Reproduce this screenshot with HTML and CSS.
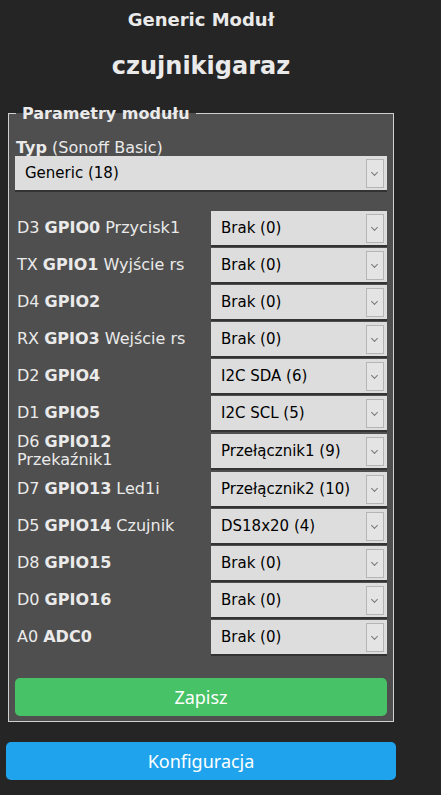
FILE: index.html
```html
<!DOCTYPE html>
<html lang="pl">
<head>
<meta charset="UTF-8" />
<meta name="viewport" content="width=device-width, initial-scale=1.0">
<title>Generic Moduł</title>
<link rel="stylesheet" href="styles.css">
</head>
<body>

<div class="main">
  <h3>Generic Moduł</h3>
  <h2>czujnikigaraz</h2>

  <fieldset>
    <legend>Parametry modułu</legend>
    <div class="typ"><b>Typ</b> (Sonoff Basic)</div>
    <div class="sel wide">
      <select><option>Generic (18)</option></select>
      <span class="arrow"></span>
    </div>

    <div class="pins">
      <div class="lbl">D3 <b>GPIO0</b> Przycisk1</div>
      <div class="sel"><select><option>Brak (0)</option></select><span class="arrow"></span></div>

      <div class="lbl">TX <b>GPIO1</b> Wyjście rs</div>
      <div class="sel"><select><option>Brak (0)</option></select><span class="arrow"></span></div>

      <div class="lbl">D4 <b>GPIO2</b></div>
      <div class="sel"><select><option>Brak (0)</option></select><span class="arrow"></span></div>

      <div class="lbl">RX <b>GPIO3</b> Wejście rs</div>
      <div class="sel"><select><option>Brak (0)</option></select><span class="arrow"></span></div>

      <div class="lbl">D2 <b>GPIO4</b></div>
      <div class="sel"><select><option>I2C SDA (6)</option></select><span class="arrow"></span></div>

      <div class="lbl">D1 <b>GPIO5</b></div>
      <div class="sel"><select><option>I2C SCL (5)</option></select><span class="arrow"></span></div>

      <div class="lbl">D6 <b>GPIO12</b><br>Przekaźnik1</div>
      <div class="sel"><select><option>Przełącznik1 (9)</option></select><span class="arrow"></span></div>

      <div class="lbl">D7 <b>GPIO13</b> Led1i</div>
      <div class="sel"><select><option>Przełącznik2 (10)</option></select><span class="arrow"></span></div>

      <div class="lbl">D5 <b>GPIO14</b> Czujnik</div>
      <div class="sel"><select><option>DS18x20 (4)</option></select><span class="arrow"></span></div>

      <div class="lbl">D8 <b>GPIO15</b></div>
      <div class="sel"><select><option>Brak (0)</option></select><span class="arrow"></span></div>

      <div class="lbl">D0 <b>GPIO16</b></div>
      <div class="sel"><select><option>Brak (0)</option></select><span class="arrow"></span></div>

      <div class="lbl">A0 <b>ADC0</b></div>
      <div class="sel"><select><option>Brak (0)</option></select><span class="arrow"></span></div>
    </div>

    <button class="btn save">Zapisz</button>
  </fieldset>

  <button class="btn conf">Konfiguracja</button>
</div>

</body>
</html>
```

FILE: styles.css
```css
body, html { margin:0; padding:0; background:#252525; color:#eaeaea; font-family:"DejaVu Sans", Verdana, sans-serif; }
.main { width:390px; margin-left:6px; }
h3 { margin:0; padding-top:9px; font-size:18px; text-align:center; color:#eaeaea; }
h2 { margin:0; padding-top:22px; font-size:24px; text-align:center; color:#eaeaea; }

fieldset { margin:24px 2px 0 2px; padding:16px 6px 5px 6px; background:#4f4f4f; border:1px solid #d0d0d0; }
legend { font-weight:bold; font-size:16px; padding:0 6px; margin-left:1px; color:#eaeaea; }

.typ { font-size:16px; line-height:18px; padding-left:1px; }

.sel { position:relative; height:34px; background:#dddddd; box-shadow:0 2px 0 #333; }
.sel select { appearance:none; -webkit-appearance:none; width:100%; height:34px; border:none; background:transparent; padding:0 0 0 10px; font-family:"DejaVu Sans", Verdana, sans-serif; font-size:15px; color:#000; outline:none; }
.arrow { position:absolute; right:3px; top:3px; width:16px; height:27px; border:1px solid #b5b5b5; background:#e4e4e4; }
.arrow:after { content:""; position:absolute; left:5px; top:10px; width:4px; height:4px; border-right:1px solid #777; border-bottom:1px solid #777; transform:rotate(45deg); }
.wide { margin-top:-1px; }

.pins { display:grid; grid-template-columns:1fr 176px; column-gap:4px; row-gap:3px; align-items:center; margin-top:21px; }
.lbl { font-size:16px; line-height:18px; padding-left:2px; }

.btn { display:block; width:100%; border:none; border-radius:5px; color:#fff; font-family:"Noto Sans", sans-serif; font-size:18px; line-height:38px; height:38px; padding:0; cursor:pointer; }
.save { background:#47c266; margin-top:24px; }
.conf { background:#1fa3ec; margin-top:20px; }
```
